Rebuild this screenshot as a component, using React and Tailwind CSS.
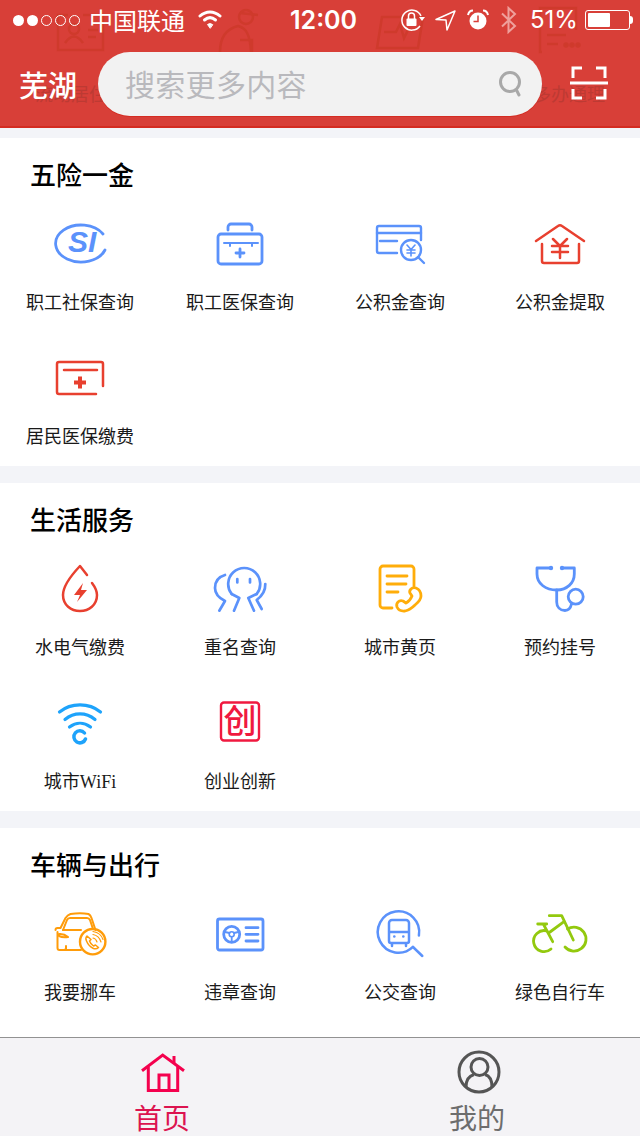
import React from 'react'

const BLUE = '#5b92fb'
const RED = '#e8402f'
const ORANGE = '#ffad0a'

function Svg({ children, color = BLUE, sw = 2.5 }) {
  return (
    <svg width="60" height="60" viewBox="0 0 60 60" fill="none" stroke={color} strokeWidth={sw} strokeLinecap="round" strokeLinejoin="round">
      {children}
    </svg>
  )
}

const SiIcon = () => (
  <Svg sw={2.8}>
    <path d="M53 21 A25.500 18.500 0 1 0 55 37" />
    <text x="18" y="39" fontFamily="Liberation Sans, sans-serif" fontStyle="italic" fontWeight="700" fontSize="30" fill={BLUE} stroke="none">SI</text>
  </Svg>
)

const MedkitIcon = () => (
  <Svg sw={2.8}>
    <rect x="8" y="21" width="44" height="30" rx="3" />
    <path d="M18 17 V14 a3 3 0 0 1 3-3 H39 a3 3 0 0 1 3 3 V17" />
    <path d="M14 30 H48 M20 30 V33 M42 30 V33" strokeWidth="2" />
    <path d="M30 36 V44 M26 40 H34" />
  </Svg>
)

const CardSearchIcon = () => (
  <Svg sw={2.4}>
    <path d="M51 27 V15 a2 2 0 0 0-2-2 H9 a2 2 0 0 0-2 2 V38 a2 2 0 0 0 2 2 H27" />
    <path d="M7 20 H51 M10 28 H27" />
    <circle cx="41" cy="37" r="10" />
    <path d="M48 44 L54 50" />
    <path d="M37 32 L41 36.500 L45 32 M37 37 H45 M37 40 H45 M41 36.500 V43" strokeWidth="1.600" />
  </Svg>
)

const HouseYenIcon = () => (
  <Svg color={RED}>
    <path d="M6 28 L28 13 Q30 11.500 32 13 L54 28" />
    <path d="M12 31 V48 a2 2 0 0 0 2 2 H47 a2 2 0 0 0 2-2 V31" />
    <path d="M23 26 L30 33 L37 26 M22 33 H38 M22 39 H38 M30 33 V45" />
  </Svg>
)

const RedCardIcon = () => (
  <Svg color={RED}>
    <path d="M53 39 V17 a2 2 0 0 0-2-2 H9 a2 2 0 0 0-2 2 V45 a2 2 0 0 0 2 2 H46" />
    <path d="M14 23 H47" />
    <path d="M30 29.500 V41.500 M24 35.500 H36" strokeWidth="4" strokeLinecap="butt" />
  </Svg>
)

const DropIcon = () => (
  <Svg color={RED}>
    <path d="M37 17 L30 8 Q13 26 13 37 C13 47 21 53 30 53 C39 53 47 47 47 37 C47 33 45 29 42 25" />
    <path d="M33 25 L24 37 H30 L27 44 L37 32 H31 Z" fill={RED} stroke="none" />
  </Svg>
)

const OctopusIcon = () => (
  <Svg sw={2.7}>
    <path d="M21.700 36 A16 16 0 1 1 46.700 36" />
    <path d="M21.700 36 L29.300 40 L24 52.700 M46.700 36 L38.300 40 L44 52.700" />
    <path d="M15 17 C8 19 5 24 5 30 C5 36 9 40 15 43 L9.300 52.700" />
    <path d="M55.300 26 C55.500 32 52 38 46.700 42 L51.700 51" />
    <path d="M27.300 21 V24.500 M40 21 V24.500" />
  </Svg>
)

const DocPhoneIcon = () => (
  <Svg color={ORANGE} sw={2.8}>
    <path d="M22 50 H13 a3 3 0 0 1-3-3 V11 a3 3 0 0 1 3-3 H41 a3 3 0 0 1 3 3 V28" />
    <path d="M17 18 H37 M17 26 H36 M17 34 H28" />
    <path d="M41 31 q2 -2 5 -1 q5 2 5 8 q0 4 -6 9 q-5 5 -10 6 q-6 .5 -8 -4 q-1 -3 1 -5 q2 -2 5 -1 l3 2 q4 -2 6 -7 l-2 -3 q-1 -2 1 -4 z" />
  </Svg>
)

const StethoIcon = () => (
  <Svg sw={2.8}>
    <path d="M21 10 H7 V16 C7 26 16 32 26.700 32 C37 32 44.300 25 44.300 16 V10 H32" />
    <circle cx="21" cy="10" r="2.200" fill={BLUE} stroke="none" />
    <circle cx="32" cy="10" r="2.200" fill={BLUE} stroke="none" />
    <path d="M26.700 32 V44 C26.700 49 30 52.500 35 52.500 C38 52.500 40.500 50.500 41.500 46" />
    <circle cx="45.700" cy="38.700" r="7.500" />
  </Svg>
)

const WifiIcon = () => (
  <Svg color="#1ea3fb" sw={3.2}>
    <path d="M9.500 20 C21 10.500 39 10.500 50.500 20" />
    <path d="M15 27.500 C24 20 36 20 45 27.500" />
    <path d="M19.500 35 C26 30 34 30 40.500 35" />
    <path d="M34.500 41 A6 6 0 1 0 35.500 47" strokeWidth="3.500" />
  </Svg>
)

const StampIcon = () => (
  <Svg color="#f0193f" sw={2.4}>
    <rect x="11" y="10.500" width="38" height="38" rx="3" />
    <text x="30" y="41" textAnchor="middle" fontFamily="Noto Sans CJK SC, sans-serif" fontWeight="500" fontSize="33" fill="#f0193f" stroke="none">创</text>
  </Svg>
)

const CarIcon = () => {
  const c = '#ff9c0a'
  return (
    <Svg color={c} sw={2}>
      <path d="M31 47 H16 V43 M7.500 29 V45 q0 2 2 2 H14 q2 0 2 -2" />
      <path d="M5.500 27 q0 -2 2 -2 l3 0 l5 -10 q2 -3 5 -4 q10 -1.500 18 0 q2 1 3 4 l4 12" />
      <path d="M13 27 l4 -10 q1 -2 3 -2 h17 q2 0 3 2 l3 9" />
      <path d="M13 27 H31 M9 31 q5 -.5 9 3 q-5 1 -9 -1 z" />
      <circle cx="42.700" cy="38.700" r="12.700" strokeWidth="2.400" />
      <path d="M37 33 q-2 2 -.5 5 q2 5 7 7.500 q3 1 5 -1 l-3 -2.500 l-2 1 q-3 -2 -4 -5 l1.500 -1.500 z" strokeWidth="1.500" />
      <path d="M43 35 q3 .5 4 4 M43 31.500 q6 1 8 7.500 M43 28.500 q8 1.500 10 8" strokeWidth="1.200" />
    </Svg>
  )
}

const LicenceIcon = () => (
  <Svg sw={2.8}>
    <rect x="7.500" y="16" width="45.500" height="31" rx="2" />
    <circle cx="21.700" cy="31.300" r="8" />
    <circle cx="21.700" cy="31.300" r="2.500" strokeWidth="1.600" />
    <path d="M15 29 L19.500 30 M28.300 29 L24 30 M21.700 34 V39" strokeWidth="1.800" />
    <path d="M36 24.700 H48 M36 31.300 H48 M36 38 H48" />
  </Svg>
)

const BusSearchIcon = () => (
  <Svg sw={2.5}>
    <path d="M48.900 32.500 A20.700 20.700 0 1 0 42.900 43.900" />
    <path d="M43 44 L52.300 53" />
    <path d="M22 17 H36 a3 3 0 0 1 3 3 V38 a2 2 0 0 1-2 2 H21 a2 2 0 0 1-2-2 V20 a3 3 0 0 1 3-3 z M19 29 H39" />
    <path d="M22 41 V43 M36 41 V43" />
    <circle cx="24.300" cy="33.500" r="1.300" fill={BLUE} stroke="none" />
    <circle cx="33.300" cy="33.500" r="1.300" fill={BLUE} stroke="none" />
  </Svg>
)

const BikeIcon = () => (
  <Svg color="#93c90e" sw={2.800}>
    <path d="M17 28 A10.500 10.500 0 1 0 21 46" />
    <path d="M37.500 26 A12 12 0 1 1 35 44" />
    <path d="M19.300 12.700 H31.700 L43.300 37" />
    <path d="M7.700 21 H16.700 M13.300 21 L22.700 38.700 M20 29 L34 18.700" />
  </Svg>
)

const sections = [
  {
    title: '五险一金',
    items: [
      { label: '职工社保查询', icon: <SiIcon /> },
      { label: '职工医保查询', icon: <MedkitIcon /> },
      { label: '公积金查询', icon: <CardSearchIcon /> },
      { label: '公积金提取', icon: <HouseYenIcon /> },
      { label: '居民医保缴费', icon: <RedCardIcon /> },
    ],
  },
  {
    title: '生活服务',
    items: [
      { label: '水电气缴费', icon: <DropIcon /> },
      { label: '重名查询', icon: <OctopusIcon /> },
      { label: '城市黄页', icon: <DocPhoneIcon /> },
      { label: '预约挂号', icon: <StethoIcon /> },
      { label: <>城市<span className="font-['Liberation_Serif',serif]">WiFi</span></>, icon: <WifiIcon /> },
      { label: '创业创新', icon: <StampIcon /> },
    ],
  },
  {
    title: '车辆与出行',
    items: [
      { label: '我要挪车', icon: <CarIcon /> },
      { label: '违章查询', icon: <LicenceIcon /> },
      { label: '公交查询', icon: <BusSearchIcon /> },
      { label: '绿色自行车', icon: <BikeIcon /> },
    ],
  },
]

function StatusBar() {
  return (
    <div className="flex items-center h-[40px] pl-[13px] text-white">
      <div className="flex gap-[3px] w-[76px]">
        <span className="w-[11px] h-[11px] rounded-full bg-white" />
        <span className="w-[11px] h-[11px] rounded-full bg-white" />
        <span className="w-[11px] h-[11px] rounded-full border border-white" />
        <span className="w-[11px] h-[11px] rounded-full border border-white" />
        <span className="w-[11px] h-[11px] rounded-full border border-white" />
      </div>
      <span className="text-[24px] leading-none w-[109px]">中国联通</span>
      <svg width="24" height="20" viewBox="0 0 24 20" fill="none" stroke="white" strokeWidth="3" strokeLinecap="round" className="-mt-[3px]">
        <path d="M2 7 C8 1.500 16 1.500 22 7" />
        <path d="M6.500 11 C10 8 14 8 17.500 11" />
        <path d="M12 19 L9.500 15.500 Q12 13.500 14.500 15.500 Z" fill="white" strokeWidth="1" />
      </svg>
      <span className="ml-[68px] w-[66px] text-[25px] leading-none font-semibold text-center font-['Inter',sans-serif]">12:00</span>
      <svg width="25" height="26" viewBox="0 0 25 26" fill="none" stroke="white" className="ml-[44px]">
        <path d="M21 9 A10 10 0 1 0 20 19" strokeWidth="1.500" />
        <path d="M19 10 H25 L22 14 Z" fill="white" stroke="none" />
        <rect x="6.500" y="11.500" width="10" height="7.500" rx="1" fill="white" stroke="none" />
        <path d="M8.500 12 V9 a3 3 0 0 1 6 0 V12" strokeWidth="1.500" />
      </svg>
      <svg width="21" height="21" viewBox="0 0 21 21" fill="none" stroke="white" strokeWidth="1.500" strokeLinejoin="round" className="ml-[10px]">
        <path d="M1 9.500 L20 1 L12 20 L11 10 Z" />
      </svg>
      <svg width="22" height="22" viewBox="0 0 22 22" className="ml-[11px]">
        <circle cx="11" cy="12" r="8.500" fill="white" />
        <path d="M11 6.500 V12.500 H6.500" stroke="#d83f38" strokeWidth="1.500" fill="none" />
        <path d="M1 6 Q2 1.500 6 1.500 M21 6 Q20 1.500 16 1.500" stroke="white" strokeWidth="2" fill="none" />
      </svg>
      <svg width="18" height="28" viewBox="0 0 18 28" fill="none" stroke="#efa09c" strokeWidth="2" className="ml-[11px]">
        <path d="M2 7.500 L15 20 L8.500 26 V2 L15 8 L2 20.500" />
      </svg>
      <span className="ml-[12px] text-[24px] leading-none font-['Inter',sans-serif]">51%</span>
      <div className="ml-[7px] flex items-center">
        <div className="w-[45px] h-[20px] border border-white rounded-[3px] p-[2px]">
          <div className="w-[22px] h-full bg-white rounded-[1px]" />
        </div>
        <div className="w-[3px] h-[8px] bg-white rounded-r-sm" />
      </div>
    </div>
  )
}

// content that has scrolled under the translucent header
function GhostRow() {
  const c = '#cf3a2c'
  return (
    <div className="absolute inset-x-0 top-0 grid grid-cols-4 h-[110px] overflow-hidden">
      <div className="flex flex-col items-center">
        <svg width="60" height="60" viewBox="0 0 60 60" fill="none" stroke={c} strokeWidth="2.500">
          <path d="M18 15 H8 V50 H53 V15 H33" />
          <circle cx="24" cy="29" r="5" />
          <path d="M15 43 Q24 30 33 43 M38 30 H48 M38 37 H46" />
        </svg>
        <span className="mt-[20px] text-[18px] leading-[26px] text-[#bd3a33] whitespace-nowrap">流动居住证</span>
      </div>
      <div className="flex flex-col items-center">
        <svg width="60" height="60" viewBox="0 0 60 60" fill="none" stroke={c} strokeWidth="2.500">
          <circle cx="36" cy="17" r="7" />
          <path d="M30 13 L48 15 M10 52 C10 38 16 29 28 26 C36 28 40 34 41 52 M30 40 H42 V52" />
        </svg>
      </div>
      <div className="flex flex-col items-center">
        <svg width="60" height="60" viewBox="0 0 60 60" fill="none" stroke={c} strokeWidth="2.500">
          <path d="M12 17 H53 L48 48 H7 Z M14 32 H26 L30 24 L34 38 L38 30 H46" />
        </svg>
      </div>
      <div className="flex flex-col items-center">
        <svg width="60" height="60" viewBox="0 0 60 60" fill="none" stroke={c} strokeWidth="2.500">
          <path d="M12 52 H10 V8 H46 V30 M17 35 H36 M17 44 H28" />
          <circle cx="36" cy="45" r="1.500" fill={c} />
          <circle cx="42" cy="45" r="1.500" fill={c} />
          <circle cx="48" cy="45" r="1.500" fill={c} />
        </svg>
        <span className="mt-[20px] text-[18px] leading-[26px] text-[#bd3a33] whitespace-nowrap">更多办通理</span>
      </div>
    </div>
  )
}

function Header() {
  return (
    <header className="relative h-[128px] shrink-0 bg-[#d83f38] border-b-2 border-[#d42c22]">
      <GhostRow />
      <div className="relative">
        <StatusBar />
        <div className="flex items-center h-[64px] mt-[12px] pl-[19px]">
          <span className="w-[79px] text-[29px] leading-none font-medium text-white">芜湖</span>
          <div className="flex items-center justify-between w-[444px] h-[64px] pl-[27px] pr-[18px] rounded-full bg-[#f2f2f2] shadow-[0_1px_0_#d42c22]">
            <span className="-mt-[2px] text-[30px] leading-none tracking-[0.3px] text-[#b9b9bd]">搜索更多内容</span>
            <svg width="26" height="28" viewBox="0 0 26 28" fill="none" stroke="#a8a8a8" strokeWidth="3" strokeLinecap="round">
              <circle cx="12" cy="12" r="9.500" />
              <path d="M18.500 20 L21 25" />
            </svg>
          </div>
          <svg width="38" height="34" viewBox="0 0 38 34" fill="none" stroke="white" strokeWidth="3" className="ml-[28px] -mt-[3px]">
            <path d="M12 2 H3 V12 M26 2 H35 V12 M12 32 H3 V23 M26 32 H35 V23" />
            <path d="M0 17 H38" />
          </svg>
        </div>
      </div>
    </header>
  )
}

function Section({ title, items, grow }) {
  return (
    <section className={`bg-white ${grow ? 'flex-1' : 'h-[328px]'}`}>
      <h2 className="h-[75px] pl-[30px] pt-[16px] text-[26px] leading-[40px] font-medium text-black">{title}</h2>
      <div className="grid grid-cols-4 gap-y-[33px]">
        {items.map((item, i) => (
          <div key={i} className="flex flex-col items-center">
            {item.icon}
            <span className="mt-[15px] text-[18px] leading-[26px] text-[#1a1a1a] whitespace-nowrap">{item.label}</span>
          </div>
        ))}
      </div>
    </section>
  )
}

function TabBar() {
  return (
    <nav className="grid grid-cols-2 h-[99px] shrink-0 bg-[#f4f3f6] border-t border-[#929292]">
      <div className="flex flex-col items-center pl-1 pt-[12px]">
        <svg width="50" height="42" viewBox="0 0 50 42" fill="none" stroke="#f4014e" strokeWidth="3" className="ml-[2px]">
          <path d="M4 20.700 L24.700 5 L46 20.700" />
          <path d="M36 6 V14" />
          <path d="M10.300 17 V40.500 H39.700 V17" />
          <path d="M21 40 V25 H31 V40" />
        </svg>
        <span className="text-[28px] leading-[36px] text-[#dc1450] mt-[7px]">首页</span>
      </div>
      <div className="flex flex-col items-center pr-1 pt-[12px]">
        <svg width="44" height="44" viewBox="0 0 44 44" fill="none" stroke="#555" strokeWidth="3" className="ml-[2px]">
          <circle cx="22" cy="22" r="20" />
          <circle cx="22.500" cy="17" r="8.500" />
          <path d="M9 37 C9 30 12 26 17 24.500 M35 37 C35 30 33 26 28 24.500" />
        </svg>
        <span className="text-[28px] leading-[36px] text-[#6d6d6d] mt-[5px] -ml-[2px]">我的</span>
      </div>
    </nav>
  )
}

export default function App() {
  return (
    <div className="flex flex-col w-[640px] h-[1136px] overflow-hidden bg-[#f3f4f8] font-['Noto_Sans_CJK_SC','Noto_Sans',sans-serif]">
      <Header />
      <main className="flex flex-col flex-1 min-h-0 overflow-hidden pt-[10px] gap-[17px]">
        {sections.map((s, i) => (
          <Section key={s.title} title={s.title} items={s.items} grow={i === 2} />
        ))}
      </main>
      <TabBar />
    </div>
  )
}
